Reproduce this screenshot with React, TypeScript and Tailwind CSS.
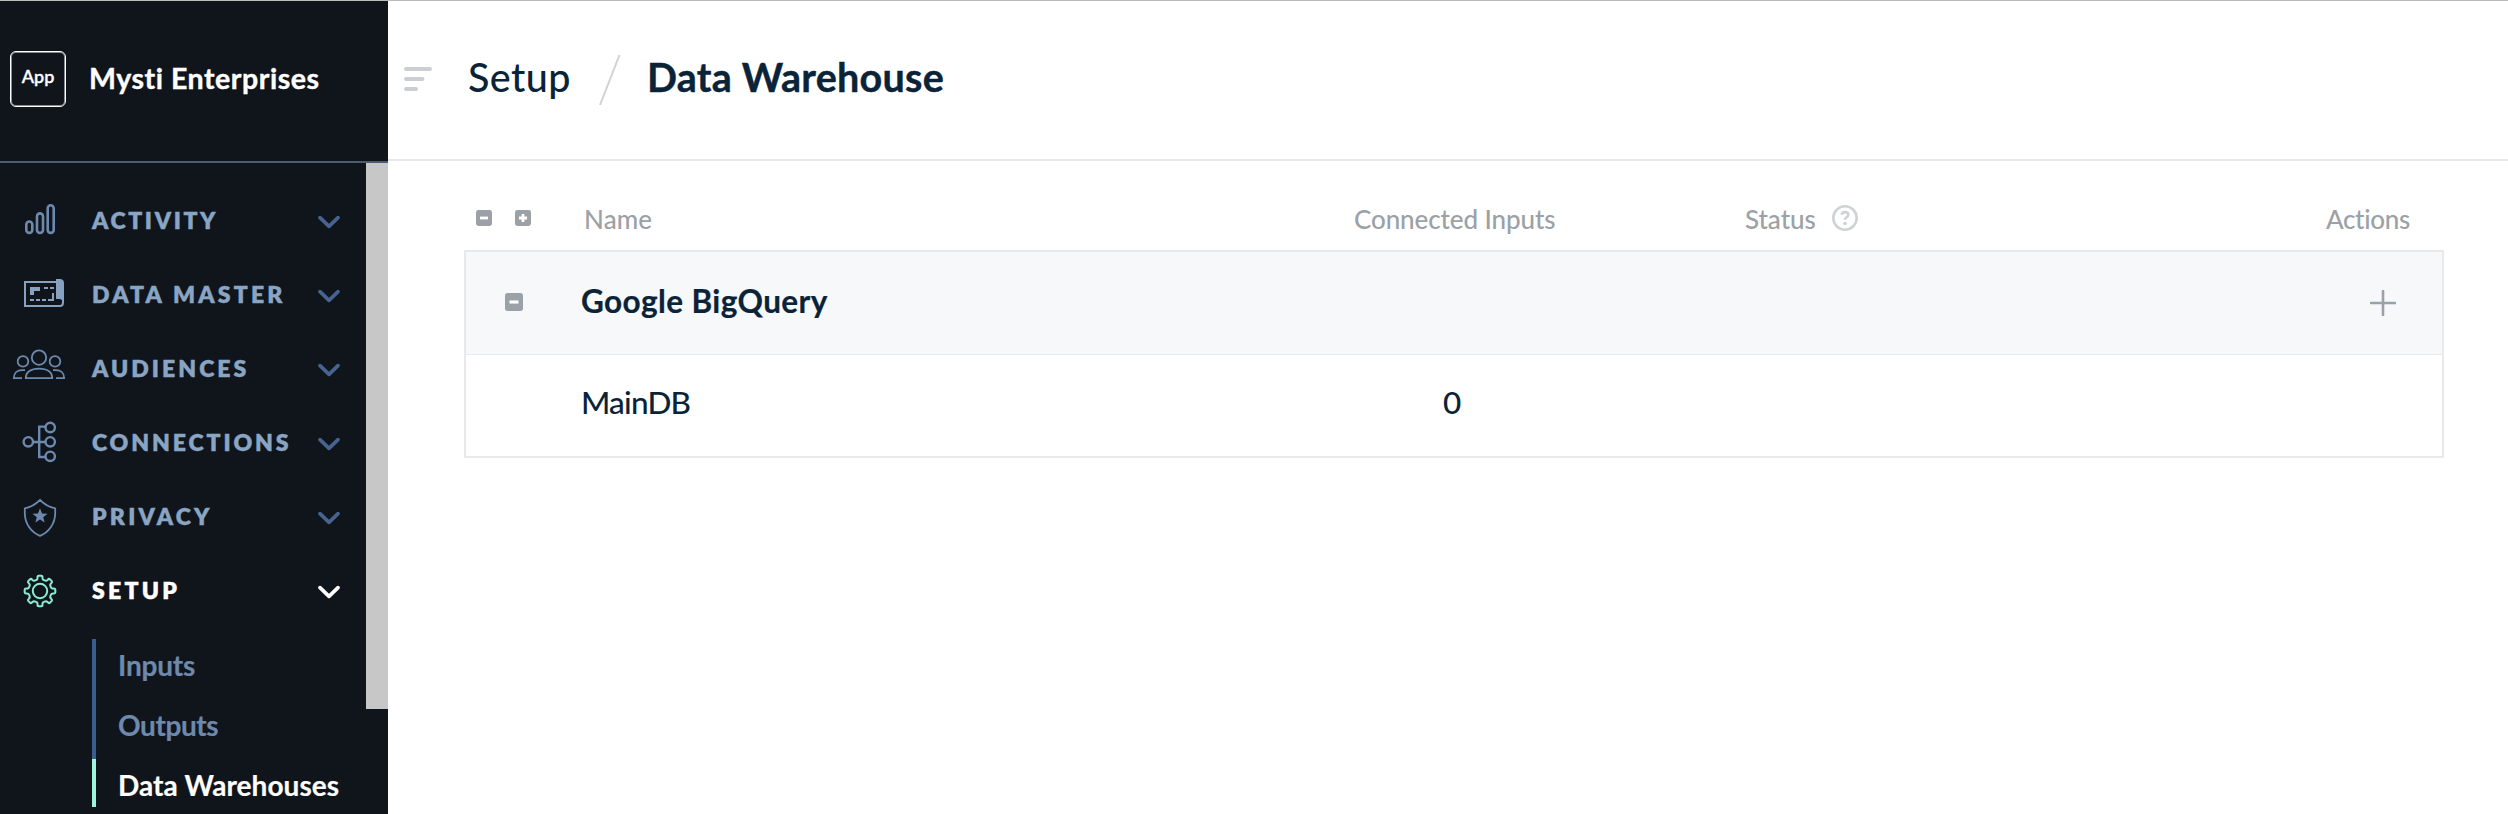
import React from "react";

const gearPath = (() => {
  const at = (r: number, deg: number) => {
    const a = (deg * Math.PI) / 180;
    return `${(40 + r * Math.sin(a)).toFixed(2)} ${(38 - r * Math.cos(a)).toFixed(2)}`;
  };
  let d = "";
  for (let i = 0; i < 8; i++) {
    const c = i * 45;
    d += `${i === 0 ? "M" : "L"}${at(11.9, c - 14)} Q${at(12.6, c - 11)} ${at(13.6, c - 10.5)} Q${at(15.4, c - 10)} ${at(15.4, c - 5)} L${at(15.4, c + 5)} Q${at(15.4, c + 10)} ${at(13.6, c + 10.5)} Q${at(12.6, c + 11)} ${at(11.9, c + 14)} Q${at(11.2, c + 22.5)} ${at(11.9, c + 31)} `;
  }
  return d + "Z";
})();

const starPoints = Array.from({ length: 10 }, (_, i) => {
  const r = i % 2 === 0 ? 7.9 : 3.4;
  const a = (i * Math.PI) / 5;
  return `${(40 + r * Math.sin(a)).toFixed(2)},${(37.2 - r * Math.cos(a)).toFixed(2)}`;
}).join(" ");

function NavIcon({ children, className }: { children: React.ReactNode; className: string }) {
  return (
    <svg viewBox="0 0 92 74" className={`h-[74px] w-[92px] shrink-0 ${className}`} fill="none" stroke="currentColor">
      {children}
    </svg>
  );
}

const activityIcon = (
  <g strokeWidth="2.6">
    <rect x="26.3" y="38.5" width="6" height="11.4" rx="3" />
    <rect x="37" y="30.4" width="6" height="19.5" rx="3" />
    <rect x="47.7" y="22.3" width="6" height="27.6" rx="3" />
  </g>
);

const dataMasterIcon = (
  <g>
    <path d="M56 25H25V49H60Q63 49 63 45.5V41" strokeWidth="2" />
    <path d="M56 22H60.5Q64 22.5 64 26V46Q62.5 42 59 42H56Z" fill="currentColor" stroke="none" />
    <path
      d="M30 30H40V34H34V38H30ZM44 30h4v2h-4ZM50 30h4v2h-4ZM30 42h4v2h-4ZM36 42h4v2h-4ZM42 42h4v2h-4ZM48 42h4V36h2v8h-6Z"
      fill="currentColor"
      stroke="none"
    />
  </g>
);

const audiencesIcon = (
  <g strokeWidth="1.8">
    <circle cx="39" cy="26.6" r="7.2" />
    <circle cx="23" cy="30.4" r="5.3" />
    <circle cx="55" cy="30.4" r="5.3" />
    <path d="M25.8 47.2H52.2C52.2 41 47 37.6 39 37.6S25.8 41 25.8 47.2Z" />
    <path d="M22 47.2H13.8C13.8 42 17.5 39.2 22 39.2H25" />
    <path d="M56 47.2H64.2C64.2 42 60.5 39.2 56 39.2H53" />
  </g>
);

const connectionsIcon = (
  <g strokeWidth="2.4">
    <circle cx="28.3" cy="36.8" r="4.7" />
    <circle cx="50.2" cy="22.5" r="4.7" />
    <circle cx="50.2" cy="36.8" r="4.7" />
    <circle cx="50.2" cy="51.3" r="4.7" />
    <path d="M33 37H45.5M45.5 21.6H39.2V52H45.5" />
  </g>
);

const privacyIcon = (
  <g strokeWidth="1.8">
    <path d="M40 20.8C36 25 31 28 24.8 29.3V34C24.8 45 31.5 53.5 40 56.8C48.5 53.5 55.2 45 55.2 34V29.3C49 28 44 25 40 20.8Z" strokeLinejoin="round" />
    <polygon points={starPoints} fill="currentColor" stroke="none" />
  </g>
);

const setupIcon = (
  <g strokeWidth="2">
    <path d={gearPath} strokeLinejoin="round" />
    <circle cx="40" cy="38" r="7.2" />
  </g>
);

const nav = [
  { label: "ACTIVITY", icon: activityIcon, iconColor: "text-[#6d8aae]", tracking: "tracking-[2.65px]" },
  { label: "DATA MASTER", icon: dataMasterIcon, iconColor: "text-[#87a2c0]", tracking: "tracking-[3.2px]" },
  { label: "AUDIENCES", icon: audiencesIcon, iconColor: "text-[#6d8aae]", tracking: "tracking-[3.05px]" },
  { label: "CONNECTIONS", icon: connectionsIcon, iconColor: "text-[#6d8aae]", tracking: "tracking-[2.9px]" },
  { label: "PRIVACY", icon: privacyIcon, iconColor: "text-[#6d8aae]", tracking: "tracking-[3.2px]" },
  { label: "SETUP", icon: setupIcon, iconColor: "text-[#8cecd2]", tracking: "tracking-[3.3px]", active: true },
];

const subnav = [
  { label: "Inputs", tracking: "tracking-[-0.2px]" },
  { label: "Outputs", tracking: "tracking-[-0.4px]" },
  { label: "Data Warehouses", tracking: "tracking-[0.05px]", active: true },
];

function Sidebar() {
  return (
    <aside className="flex h-[813px] w-[388px] shrink-0 flex-col overflow-hidden bg-[#10151b]">
      <div className="flex h-[162px] shrink-0 items-center border-b-2 border-[#4e5a6e] pb-[4px] pl-[10px]">
        <div className="flex size-[56px] items-center justify-center rounded-[6px] border border-white pb-[6px] text-[18px] leading-none font-semibold text-white shadow-[inset_0_0_0_1px_rgba(255,255,255,0.5)] [-webkit-text-stroke:0.3px]">
          App
        </div>
        <div className="ml-[23px] pb-[2px] text-[28.5px] leading-none font-bold tracking-[0.55px] whitespace-nowrap text-white [-webkit-text-stroke:0.4px]">
          Mysti Enterprises
        </div>
      </div>
      <div className="flex min-h-0 grow">
        <nav className="w-[366px] shrink-0 pt-[20px]">
          {nav.map((n) => (
            <div key={n.label} className="flex h-[74px] items-center">
              <NavIcon className={n.iconColor}>{n.icon}</NavIcon>
              <span className={`pt-px text-[23px] leading-none font-extrabold whitespace-nowrap [-webkit-text-stroke:0.4px] ${n.tracking} ${n.active ? "text-white" : "text-[#8aa5c3]"}`}>
                {n.label}
              </span>
              <svg viewBox="0 0 22 74" className={`mr-[26px] ml-auto h-[74px] w-[22px] shrink-0 ${n.active ? "text-white" : "text-[#46648f]"}`} fill="none" stroke="currentColor" strokeWidth="3.6" strokeLinecap="round" strokeLinejoin="round">
                <path d="M2 34.6L11 43.4L20 34.6" />
              </svg>
            </div>
          ))}
          <div className="mt-[12px] ml-[92px]">
            {subnav.map((s) => (
              <div
                key={s.label}
                className={`flex items-start border-l-4 pl-[22px] ${s.active ? "h-[48px] border-[#9ff5dc]" : "h-[60px] border-[#3a5c8e]"}`}
              >
                <span className={`flex h-[48px] items-center pt-[3px] text-[28px] leading-none font-bold whitespace-nowrap [-webkit-text-stroke:0.2px] ${s.tracking} ${s.active ? "text-white" : "text-[#6d89ac]"}`}>
                  {s.label}
                </span>
              </div>
            ))}
          </div>
        </nav>
        <div className="h-[546px] w-[22px] bg-[#c7c7c7]" />
      </div>
    </aside>
  );
}

function Toggle({ size, plus }: { size: "sm" | "md"; plus?: boolean }) {
  return (
    <svg viewBox="0 0 16 16" className={`shrink-0 ${size === "sm" ? "size-[16px]" : "size-[18px]"}`}>
      <rect width="16" height="16" rx="2.4" fill="#9ba1a6" />
      <path d={plus ? "M4 8H12M8 4V12" : "M4 8H12"} stroke="#fff" strokeWidth="2.8" />
    </svg>
  );
}

export default function App() {
  return (
    <div className="h-[814px] w-[2508px] overflow-hidden border-t border-[#b9bdbc] bg-white font-['Lato',sans-serif] font-medium [font-variant-ligatures:none]">
      <div className="flex">
        <Sidebar />
        <main className="min-w-0 grow">
          <header className="flex h-[160px] items-center border-b-2 border-[#e9e9e9] pl-[16px] text-[39.5px] leading-none text-[#0b2338]">
            <svg viewBox="0 0 28 24" className="mb-[2px] h-[24px] w-[28px]" stroke="#cbcfd3" strokeWidth="4" strokeLinecap="round">
              <path d="M2 2H26M2 12H18.5M2 22H12" />
            </svg>
            <span className="ml-[36px] w-[131px] pb-[6px] tracking-[0.4px]">Setup</span>
            <svg viewBox="0 0 22 50" className="h-[50px] w-[22px]" stroke="#cfd3d6" strokeWidth="2">
              <path d="M1 50L20.5 0" />
            </svg>
            <span className="ml-[26px] pb-[6px] font-bold tracking-[0.25px] whitespace-nowrap [-webkit-text-stroke:0.4px]">Data Warehouse</span>
          </header>

          <section className="pr-[64px] pl-[76px]">
            <div className="flex h-[89px] items-center pt-[25px] pl-[12px] text-[26px] leading-none whitespace-nowrap text-[#9ba1a6]">
              <Toggle size="sm" />
              <span className="w-[23px]" />
              <Toggle size="sm" plus />
              <span className="ml-[53px] w-[770px] pt-[2px] tracking-[0.1px]">Name</span>
              <span className="w-[391px] pt-[2px] tracking-[-0.1px]">Connected Inputs</span>
              <span className="w-[87px] pt-[2px] tracking-[-0.05px]">Status</span>
              <svg viewBox="0 0 26 26" className="size-[26px] shrink-0" fill="none" stroke="#cfd3d6" strokeWidth="2.6">
                <circle cx="13" cy="13" r="11.7" />
                <path d="M9.6 9.7C9.9 7.9 11.2 7.1 13 7.1C15 7.1 16.4 8.1 16.4 9.8C16.4 12.1 13 12 13 14.8" strokeWidth="2.6" />
                <circle cx="13" cy="18.6" r="1.8" fill="#cfd3d6" stroke="none" />
              </svg>
              <span className="mr-[34px] ml-auto pt-[2px] tracking-[-0.3px]">Actions</span>
            </div>
            <div className="h-[208px] border-2 border-[#e9e9e9] text-[31.5px] leading-none text-[#0b2338]">
              <div className="flex h-[103px] items-center border-b border-[#e8ebed] bg-[#f6f8fa] pl-[39px]">
                <span className="pb-[2px]">
                  <Toggle size="md" />
                </span>
                <span className="ml-[58px] pb-[2px] font-bold tracking-[0.4px] whitespace-nowrap [-webkit-text-stroke:0.2px]">Google BigQuery</span>
                <svg viewBox="0 0 26 26" className="mr-[46px] ml-auto size-[26px]" stroke="#9ba1a6" strokeWidth="2.6" strokeLinecap="round">
                  <path d="M1 13H25M13 1V25" />
                </svg>
              </div>
              <div className="flex h-[101px] items-center pb-[6px] pl-[115px]">
                <span className="w-[862px] tracking-[-0.8px]">MainDB</span>
                <span>0</span>
              </div>
            </div>
          </section>
        </main>
      </div>
    </div>
  );
}
